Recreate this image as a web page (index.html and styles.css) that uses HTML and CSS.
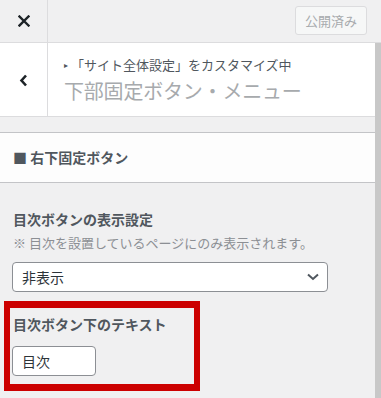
FILE: index.html
```html
<!DOCTYPE html>
<html lang="ja">
<head>
<meta charset="utf-8">
<link rel="stylesheet" href="styles.css">
</head>
<body>
<div class="topbar">
  <div class="close">
    <svg width="12" height="12" viewBox="0 0 12 12"><path d="M1.5 1.5 L10.5 10.5 M10.5 1.5 L1.5 10.5" stroke="#1d2327" stroke-width="2.4" stroke-linecap="square"/></svg>
  </div>
  <div class="spacer"></div>
  <button class="publish">公開済み</button>
</div>
<div class="body">
  <div class="main">
    <div class="header">
      <div class="back">
        <svg width="9" height="13" viewBox="0 0 9 13"><path d="M7 1.5 L2.5 6.5 L7 11.5" fill="none" stroke="#1d2327" stroke-width="2.6"/></svg>
      </div>
      <div class="titles">
        <div class="crumb"><span class="tri">▸</span>「サイト全体設定」をカスタマイズ中</div>
        <div class="panel-title">下部固定ボタン・メニュー</div>
      </div>
    </div>
    <div class="section">■ 右下固定ボタン</div>
    <div class="controls">
      <div class="control">
        <div class="ctitle">目次ボタンの表示設定</div>
        <div class="desc">※ 目次を設置しているページにのみ表示されます。</div>
        <div class="select">
          <span>非表示</span>
          <svg width="12" height="8" viewBox="0 0 12 8"><path d="M1 1.5 L6 6 L11 1.5" fill="none" stroke="#50575e" stroke-width="2"/></svg>
        </div>
      </div>
      <div class="control highlighted">
        <div class="ctitle">目次ボタン下のテキスト</div>
        <div class="input">目次</div>
        <div class="redbox"></div>
      </div>
    </div>
  </div>
  <div class="scrollbar"></div>
</div>
</body>
</html>
```
FILE: styles.css
```css
* { box-sizing: border-box; }
html, body { margin: 0; padding: 0; }
body {
  width: 381px;
  height: 398px;
  overflow: hidden;
  background: #f0f0f1;
  font-family: "Noto Sans CJK JP", "Noto Sans", sans-serif;
  color: #50575e;
}
.topbar {
  display: flex;
  align-items: flex-start;
  height: 43px;
  border-bottom: 1px solid #dcdcde;
  background: #f0f0f1;
}
.close {
  width: 48px;
  height: 42px;
  border-right: 1px solid #dcdcde;
  display: flex;
  align-items: center;
  justify-content: center;
}
.spacer { flex: 1; }
.publish {
  margin: 6px 14px 0 0;
  width: 72px;
  height: 29px;
  border: 1px solid #dcdcde;
  border-radius: 3px;
  background: #f6f7f7;
  color: #a7aaad;
  font-family: inherit;
  font-size: 13px;
  padding: 0;
  line-height: 27px;
}
.body { display: flex; }
.main { width: 375px; }
.scrollbar { width: 6px; height: 355px; background: #c8c8c8; }
.header {
  display: flex;
  background: #fff;
  height: 74px;
  border-bottom: 1px solid #dcdcde;
}
.back {
  width: 48px;
  border-right: 1px solid #dcdcde;
  display: flex;
  align-items: center;
  justify-content: center;
  padding-top: 2px;
}
.titles { padding: 13px 0 0 16px; }
.crumb {
  font-size: 13px;
  line-height: 18px;
  color: #50575e;
}
.tri { font-size: 8px; color: #50575e; display: inline-block; width: 7px; vertical-align: 2px; }
.panel-title {
  margin-top: 4px;
  font-size: 20px;
  line-height: 26px;
  color: #a7aaad;
  letter-spacing: -0.2px;
}
.section {
  margin-top: 15px;
  height: 51px;
  border-top: 1px solid #c3c4c7;
  border-bottom: 1px solid #c3c4c7;
  background: #fdfdfd;
  font-size: 14px;
  font-weight: 700;
  line-height: 49px;
  padding-left: 13px;
  color: #50575e;
}
.controls { padding-left: 12px; }
.control { position: relative; }
.ctitle {
  font-size: 14px;
  font-weight: 700;
  line-height: 20px;
  padding-left: 1px;
  color: #50575e;
}
.control:first-child .ctitle { margin-top: 26px; }
.desc {
  margin-top: 4px;
  font-size: 13px;
  line-height: 20px;
  color: #8c8f94;
  padding-left: 1px;
}
.select {
  margin-top: 9px;
  width: 316px;
  height: 30px;
  border: 1px solid #8c8f94;
  border-radius: 4px;
  background: #fff;
  display: flex;
  align-items: center;
  justify-content: space-between;
  padding: 0 8px 0 9px;
  font-size: 14px;
  color: #2c3338;
}
.highlighted { margin-top: 22px; }
.input {
  margin-top: 12px;
  width: 84px;
  height: 30px;
  border: 1px solid #8c8f94;
  border-radius: 4px;
  background: #fff;
  font-size: 14px;
  line-height: 28px;
  padding-left: 9px;
  color: #2c3338;
}
.redbox {
  position: absolute;
  left: -8px;
  top: -13px;
  width: 196px;
  height: 90px;
  border: solid #cc0000;
  border-width: 7px 6px;
}
```
